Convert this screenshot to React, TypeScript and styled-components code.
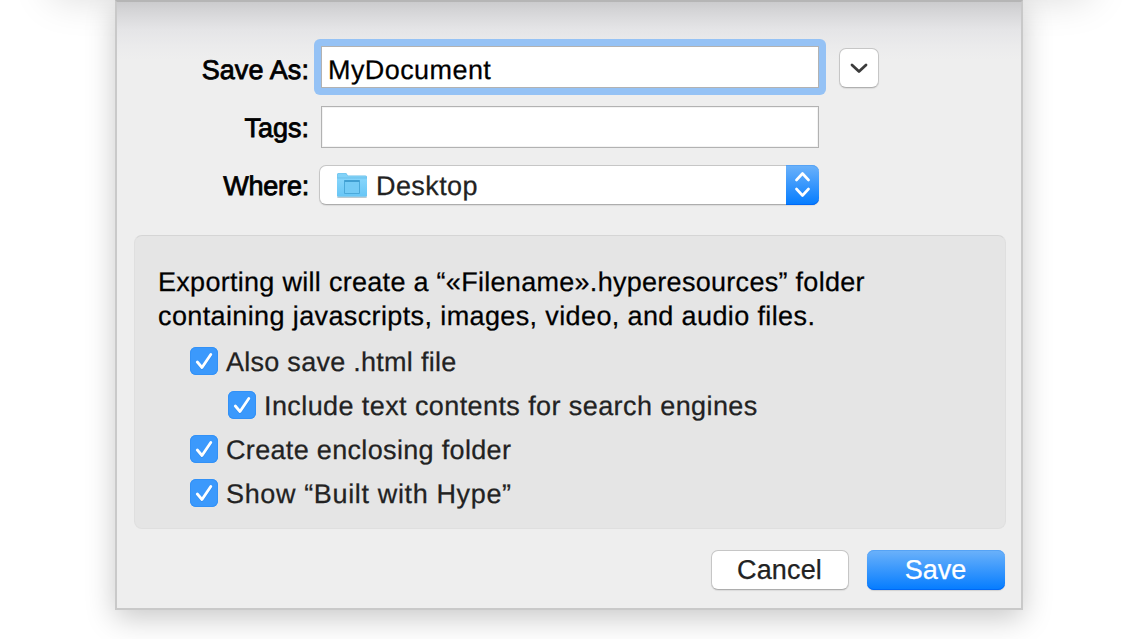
import React from "react";
import styled, { createGlobalStyle } from "styled-components";

const Global = createGlobalStyle`
  html, body { margin: 0; padding: 0; background: #fff; }
  * { box-sizing: border-box; }
  body {
    overflow: hidden;
    font: 27px/34px "Liberation Sans", Arial, sans-serif;
    color: #000;
    text-rendering: geometricPrecision;
  }
`;

const Window = styled.div`
  position: relative;
  height: 639px;
  width: 1142px;
  display: flex;
  align-items: flex-start;
  justify-content: center;
  overflow: hidden;
  padding-right: 4px;
`;

const TitleShadow = styled.div`
  position: absolute;
  left: 56px;
  right: 56px;
  top: -50px;
  height: 40px;
  box-shadow: 0 4px 40px 4px rgba(0, 0, 0, 0.15);
`;

const Sheet = styled.main`
  position: relative;
  width: 908px;
  height: 610px;
  border: 2px solid #c9c9c9;
  border-top-color: #b5b5b5;
  background: linear-gradient(#cbcbcd 0, #d4d4d6 8px, #dddddf 18px, #e5e5e7 28px, #ebebec 44px, #eee 58px);
  box-shadow: 0 8px 28px rgba(0, 0, 0, 0.22);
  padding: 37px 15px 0 17px;
`;

const Form = styled.section`
  display: grid;
  grid-template-columns: 175px 512px 40px;
  grid-template-rows: 56px 64px 52px;
  align-items: center;
`;

const Copy = styled.span<{ $track?: number }>`
  white-space: pre;
  -webkit-text-stroke: 0.25px currentColor;
  letter-spacing: ${(p) => p.$track ?? 0}px;
`;

const Label = styled.label<{ $track?: number; $drop?: number }>`
  text-align: right;
  white-space: pre;
  padding-top: ${(p) => p.$drop ?? 2}px;
  -webkit-text-stroke: 0.8px #000;
  letter-spacing: ${(p) => p.$track ?? 0}px;
`;

const Field = styled.div`
  display: flex;
  align-items: center;
  width: 498px;
  height: 42px;
  margin-left: 12px;
  padding: 5px 0 0 6px;
  background: #fff;
  border: 1px solid #b2b2b2;
  box-shadow: inset 0 0 0 1px #f3f3f3;
`;

const FocusRing = styled.div`
  width: 512px;
  height: 56px;
  margin-left: 5px;
  padding: 7px;
  border-radius: 6px;
  background: #95c2f5;
  ${Field} { margin: 0; box-shadow: none; }
`;

const Expand = styled.button`
  width: 40px;
  height: 40px;
  margin: 2px 0 0 18px;
  padding: 0;
  display: grid;
  place-items: center;
  border: 1px solid #c6c6c6;
  border-bottom-color: #b0b0b0;
  border-radius: 7px;
  background: #fff;
  box-shadow: 0 1px 1px rgba(0, 0, 0, 0.08);
`;

const Popup = styled.div`
  display: flex;
  align-items: center;
  width: 500px;
  height: 40px;
  margin-left: 10px;
  padding-left: 16px;
  border: 1px solid #c6c6c6;
  border-right: 0;
  border-bottom-color: #adadad;
  border-radius: 7px;
  background: #fff;
  color: #222;
  box-shadow: 0 1px 1px rgba(0, 0, 0, 0.08);
  ${Copy} { margin-left: 8px; padding-top: 2px; }
`;

const Cap = styled.div`
  width: 33px;
  height: 40px;
  margin: -1px 0 -1px auto;
  display: grid;
  place-items: center;
  border-radius: 0 7px 7px 0;
  background: linear-gradient(#6cb2fa, #047cff);
  box-shadow: inset 0 1px #56a3f5, inset 0 -1px #0068f5;
`;

const Panel = styled.section`
  width: 872px;
  height: 294px;
  margin-top: 24px;
  padding: 29px 23px 0;
  border: 1px solid #dfdfdf;
  border-top-color: #d5d5d5;
  border-radius: 8px;
  background: #e5e5e5;
`;

const Message = styled.p`
  display: flex;
  flex-direction: column;
  margin: 0 0 14px;
`;

const Option = styled.div<{ $nested?: boolean }>`
  display: flex;
  align-items: center;
  height: 28px;
  margin: 0 0 16px ${(p) => (p.$nested ? 70 : 32)}px;
  color: #222;
  ${Copy} { margin-left: 8px; padding-top: 2px; }
`;

const Box = styled.span`
  width: 28px;
  height: 28px;
  flex: none;
  border-radius: 6px;
  background: #3b99fc;
  box-shadow: inset 0 0 0 1px #3391f6;
  svg { display: block; }
`;

const Actions = styled.footer`
  display: flex;
  justify-content: flex-end;
  gap: 18px;
  margin: 21px 1px 0 0;
`;

const Button = styled.button<{ $primary?: boolean }>`
  width: 138px;
  height: 40px;
  padding: 0 1px 0 0;
  font: inherit;
  line-height: 38px;
  border: ${(p) => (p.$primary ? "0" : "1px solid #c6c6c6")};
  border-bottom-color: #adadad;
  border-radius: 7px;
  color: ${(p) => (p.$primary ? "#fff" : "#222")};
  background: ${(p) => (p.$primary ? "linear-gradient(#6cb2fa, #047cff)" : "#fff")};
  box-shadow: ${(p) =>
    p.$primary
      ? "inset 0 1px #56a3f5, inset 0 -1px #0068f5, 0 1px 1px rgba(0,0,0,.12)"
      : "0 1px 1px rgba(0,0,0,.08)"};
`;

const FolderIcon = () => (
  <svg width="32" height="28" viewBox="0 0 32 28">
    <defs>
      <linearGradient id="folder" x1="0" y1="0" x2="0" y2="1">
        <stop offset="0" stopColor="#86d5fb" />
        <stop offset="1" stopColor="#68c6f6" />
      </linearGradient>
    </defs>
    <path d="M1 25.500h30v.5q0 1-1.500 1h-27Q1 27 1 26z" fill="#b9c9d2" />
    <path d="M1 3.500q0-1.500 1.500-1.500h7q1 0 1.500 1l.8 1.500H29.500q1.500 0 1.500 1.500V24.500q0 1.300-1.500 1.300h-27Q1 25.800 1 24.500z" fill="#6bc0ea" />
    <path d="M1.500 3.800q0-1.200 1.300-1.200h6.500q.8 0 1.200.9l1 1.800H29q1.500 0 1.500 1.200h-29z" fill="#82d2f8" />
    <path d="M1 7.500h30V24q0 1-1.500 1h-27q-1.500 0-1.500-1z" fill="url(#folder)" />
    <path d="M8.500 9.500h15v13h-15z" fill="#74cbf6" stroke="#4aa9da" />
    <path d="M8.500 10h15" stroke="#409fd2" strokeWidth="2" />
  </svg>
);

const Check = () => (
  <svg width="28" height="28" viewBox="0 0 28 28" fill="none" strokeLinecap="round" strokeLinejoin="round">
    <path d="M7.500 16.500l4.500 5L21 8.500" stroke="#257fe0" strokeOpacity=".5" strokeWidth="2.600" />
    <path d="M7.300 15l4.700 5.500L20.800 7.500" stroke="#fff" strokeWidth="2.800" />
  </svg>
);

const options = [
  { text: "Also save .html file", track: 0.27 },
  { text: "Include text contents for search engines", track: 0.41, nested: true },
  { text: "Create enclosing folder", track: 0.33 },
  { text: "Show “Built with Hype”", track: 0.64 },
];

export default function App() {
  return (
    <>
      <Global />
      <Window>
        <TitleShadow />
        <Sheet>
          <Form>
            <Label $drop={6} $track={0.1}>Save As:</Label>
            <FocusRing>
              <Field><Copy $track={0.42}>MyDocument</Copy></Field>
            </FocusRing>
            <Expand aria-label="Expand">
              <svg width="18" height="12" viewBox="0 0 18 12" fill="none">
                <path d="M2 3l7 6.500 7-6.500" stroke="#3c3c3c" strokeWidth="2.800" strokeLinecap="round" strokeLinejoin="round" />
              </svg>
            </Expand>
            <Label>Tags:</Label>
            <Field />
            <span />
            <Label $track={-0.2}>Where:</Label>
            <Popup>
              <FolderIcon />
              <Copy $track={0.42}>Desktop</Copy>
              <Cap>
                <svg width="18" height="26" viewBox="0 0 18 26" fill="none" stroke="#fff" strokeWidth="2.600" strokeLinecap="round" strokeLinejoin="round">
                  <path d="M2.500 8l6-6.500 6 6.500M2.500 17l6 6.500 6-6.500" />
                </svg>
              </Cap>
            </Popup>
          </Form>
          <Panel>
            <Message>
              <Copy $track={0.29}>Exporting will create a “«Filename».hyperesources” folder</Copy>
              <Copy $track={0.38}>containing javascripts, images, video, and audio files.</Copy>
            </Message>
            {options.map((o) => (
              <Option key={o.text} $nested={o.nested}>
                <Box><Check /></Box>
                <Copy $track={o.track}>{o.text}</Copy>
              </Option>
            ))}
          </Panel>
          <Actions>
            <Button><Copy $track={0.15}>Cancel</Copy></Button>
            <Button $primary><Copy>Save</Copy></Button>
          </Actions>
        </Sheet>
      </Window>
    </>
  );
}
